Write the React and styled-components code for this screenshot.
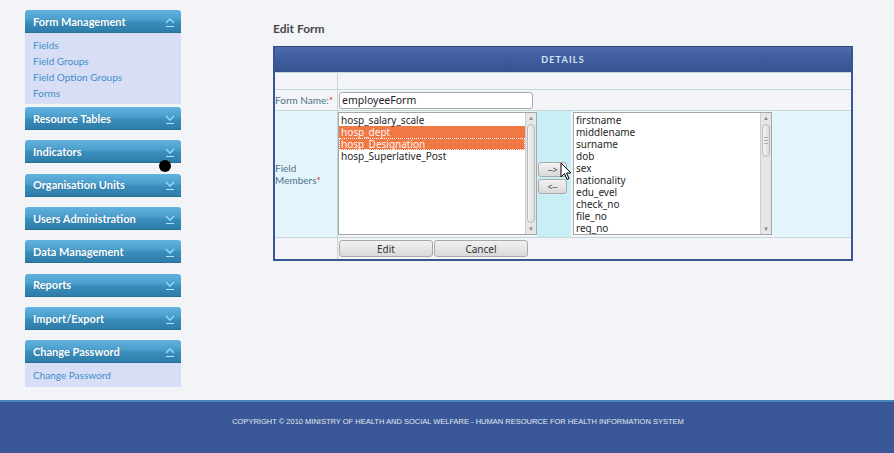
import styled, { createGlobalStyle } from "styled-components";

const GlobalStyle = createGlobalStyle`
  html, body {
    margin: 0;
    padding: 0;
    background: #f3f4f8;
  }
  body {
    font-family: "Lato", "Liberation Sans", sans-serif;
  }
`;

const Page = styled.div`
  position: relative;
  min-height: 453px;
  display: flex;
  flex-direction: column;
`;

const Body = styled.div`
  height: 400px;
  display: flex;
  align-items: flex-start;
`;

const Sidebar = styled.div`
  width: 156px;
  margin: 10px 0 0 25px;
  display: flex;
  flex-direction: column;
`;

const Section = styled.div`
  margin-bottom: ${(p) => (p.$open ? "3px" : "10.35px")};
`;

const SectionHead = styled.div`
  height: 23px;
  display: flex;
  align-items: center;
  justify-content: space-between;
  padding: 0 5px 0 8px;
  box-sizing: border-box;
  border-radius: 3px 3px 0 0;
  background: linear-gradient(#62b2de 0%, #4a9dcb 45%, #3a8ebd 55%, #2e7ca8 100%);
  border-bottom: 1px solid #2a6f96;
  color: #fff;
  font-weight: 700;
  font-size: 11px;
  text-shadow: 0 0 1px rgba(0, 40, 70, 0.3);
`;

const SubMenu = styled.div`
  background: #d9def7;
  padding: 4px 8px ${(p) => (p.$compact ? "4px" : "3px")};
  display: flex;
  flex-direction: column;
`;

const SubLink = styled.a`
  color: #3c8fc6;
  font-size: 10px;
  line-height: 16px;
  text-decoration: none;
`;

const Main = styled.div`
  margin-left: 92px;
  width: 580px;
  padding-top: 21px;
`;

const Title = styled.h2`
  margin: 0 0 10px;
  font-size: 12px;
  font-weight: 700;
  color: #4a4a4a;
  line-height: 15px;
`;

const Frame = styled.div`
  border: 2px solid #3a5593;
  border-top: none;
  background: #f3f4f8;
`;

const FrameHead = styled.div`
  height: 26px;
  box-sizing: border-box;
  display: flex;
  align-items: center;
  justify-content: center;
  background: linear-gradient(#4d6aad, #3f5c9e 50%, #36538f);
  border-top: 1px solid #2d4680;
  color: #dbe3f1;
  font-size: 9px;
  font-weight: 700;
  letter-spacing: 1.2px;
`;

const Row = styled.div`
  display: flex;
  height: ${(p) => p.$h}px;
  background: ${(p) => p.$bg || "#f3f4f8"};
  border-top: 1px solid #c4d8da;
  &:first-of-type {
    border-top: none;
  }
`;

const Label = styled.div`
  width: 62px;
  flex: none;
  border-right: 1px solid #c4d8da;
  display: flex;
  align-items: center;
  font-size: 10px;
  color: #4f7488;
  line-height: 12px;
`;

const Req = styled.span`
  color: #d8252b;
`;

const Cell = styled.div`
  display: flex;
  align-items: ${(p) => p.$align || "center"};
  width: ${(p) => (p.$w ? `${p.$w}px` : "auto")};
  flex: ${(p) => (p.$w ? "none" : "1")};
  background: ${(p) => p.$bg || "transparent"};
  padding: ${(p) => p.$pad || "0"};
  box-sizing: border-box;
`;

const TextInput = styled.div`
  width: 194px;
  height: 17px;
  box-sizing: border-box;
  border: 1px solid #aaa;
  border-radius: 3px;
  background: #fff;
  font-family: "Noto Sans", "Open Sans", sans-serif;
  font-size: 10.5px;
  color: #222;
  line-height: 15px;
  padding-left: 2px;
  margin-left: 1px;
`;

const ListBox = styled.div`
  width: ${(p) => p.$w}px;
  height: 123px;
  box-sizing: border-box;
  border: 1px solid #a6a6a6;
  background: #fff;
  display: flex;
`;

const Options = styled.div`
  flex: 1;
  padding-top: 1px;
  overflow: hidden;
`;

const Option = styled.div`
  height: 12px;
  line-height: 12px;
  font-family: "Noto Sans", "Open Sans", sans-serif;
  font-size: 10px;
  padding-left: 2px;
  color: ${(p) => (p.$sel ? "#fff3ee" : "#262626")};
  background: ${(p) => (p.$sel ? "#ef7845" : "transparent")};
  outline: ${(p) => (p.$focus ? "1px dotted #fff" : "none")};
  outline-offset: -1px;
  white-space: nowrap;
`;

const Scrollbar = styled.div`
  width: 10px;
  flex: none;
  background: #e6e6e6;
  border-left: 1px solid #cfcfcf;
  display: flex;
  flex-direction: column;
  align-items: center;
`;

const ScrollArrow = styled.div`
  height: 10px;
  width: 100%;
  display: flex;
  align-items: center;
  justify-content: center;
  color: #888;
  font-size: 6px;
  line-height: 1;
`;

const Track = styled.div`
  flex: 1;
  width: 100%;
  position: relative;
`;

const Thumb = styled.div`
  position: absolute;
  left: 1px;
  right: 1px;
  top: ${(p) => p.$top}px;
  height: ${(p) => p.$h}px;
  border-radius: 4px;
  border: 1px solid #b9b9b9;
  background: linear-gradient(90deg, #f4f4f4, #dcdcdc);
  box-sizing: border-box;
  display: flex;
  align-items: center;
  justify-content: center;
`;

const Grip = styled.div`
  width: 4px;
  height: 5px;
  border-top: 1px solid #aaa;
  border-bottom: 1px solid #aaa;
  position: relative;
  &::after {
    content: "";
    position: absolute;
    left: 0;
    right: 0;
    top: 2px;
    border-top: 1px solid #aaa;
  }
`;

const Button = styled.button`
  width: ${(p) => p.$w}px;
  height: ${(p) => p.$h}px;
  padding: 0;
  border: 1px solid #a9a9a9;
  border-radius: 3px;
  background: linear-gradient(#f2f2f2, #d9d9d9);
  font-family: "Noto Sans", "Open Sans", sans-serif;
  font-size: ${(p) => p.$fs || 10}px;
  color: #333;
  line-height: 1;
  margin-left: ${(p) => p.$ml || 0}px;
`;

const ArrowStack = styled.div`
  display: flex;
  flex-direction: column;
  gap: 2px;
  margin-left: 1px;
  margin-top: 8px;
`;

const Footer = styled.footer`
  height: 53px;
  box-sizing: border-box;
  background: #3a5897;
  border-top: 2px solid #4a86bd;
  display: flex;
  justify-content: center;
  padding-top: 15px;
  padding-left: 22px;
`;

const FooterText = styled.div`
  font-family: "Liberation Sans", Arial, sans-serif;
  font-size: 7.5px;
  color: #e3e7f0;
`;

const Dot = styled.div`
  position: absolute;
  left: 159px;
  top: 160px;
  width: 12px;
  height: 12px;
  border-radius: 50%;
  background: #000;
`;

const Cursor = styled.svg`
  position: absolute;
  left: 560px;
  top: 162px;
`;

function Chevron({ up }) {
  return (
    <svg width="12" height="13" viewBox="0 0 12 13">
      <path
        d={up ? "M2 8 L6 4 L10 8" : "M2 4 L6 8 L10 4"}
        fill="none"
        stroke="#8fd3fa"
        strokeWidth="1.6"
      />
      <path d="M2 11.5 H10" stroke="#b6e2fb" strokeWidth="1" />
    </svg>
  );
}

const sections = [
  { name: "Form Management", open: true, links: ["Fields", "Field Groups", "Field Option Groups", "Forms"] },
  { name: "Resource Tables" },
  { name: "Indicators" },
  { name: "Organisation Units" },
  { name: "Users Administration" },
  { name: "Data Management" },
  { name: "Reports" },
  { name: "Import/Export" },
  { name: "Change Password", open: true, links: ["Change Password"] },
];

const selected = [
  { name: "hosp_salary_scale" },
  { name: "hosp_dept", sel: true },
  { name: "hosp_Designation", sel: true, focus: true },
  { name: "hosp_Superlative_Post" },
];

const available = [
  "firstname",
  "middlename",
  "surname",
  "dob",
  "sex",
  "nationality",
  "edu_evel",
  "check_no",
  "file_no",
  "reg_no",
];

function Scroll({ thumbTop, thumbH, grip }) {
  return (
    <Scrollbar>
      <ScrollArrow>▲</ScrollArrow>
      <Track>
        <Thumb $top={thumbTop} $h={thumbH}>
          {grip && <Grip />}
        </Thumb>
      </Track>
      <ScrollArrow>▼</ScrollArrow>
    </Scrollbar>
  );
}

export default function App() {
  return (
    <>
      <GlobalStyle />
      <Page>
        <Body>
          <Sidebar>
            {sections.map((s) => (
              <Section key={s.name} $open={s.open}>
                <SectionHead>
                  <span>{s.name}</span>
                  <Chevron up={s.open} />
                </SectionHead>
                {s.links && (
                  <SubMenu $compact={s.links.length === 1}>
                    {s.links.map((l) => (
                      <SubLink key={l} href="#">
                        {l}
                      </SubLink>
                    ))}
                  </SubMenu>
                )}
              </Section>
            ))}
          </Sidebar>

          <Main>
            <Title>Edit Form</Title>
            <Frame>
              <FrameHead>DETAILS</FrameHead>
              <Row $h={16}>
                <Label />
                <Cell />
              </Row>
              <Row $h={20}>
                <Label>
                  Form Name:<Req>*</Req>
                </Label>
                <Cell>
                  <TextInput>employeeForm</TextInput>
                </Cell>
              </Row>
              <Row $h={126} $bg="#e4f4fb">
                <Label>
                  <span>
                    Field
                    <br />
                    Members<Req>*</Req>
                  </span>
                </Label>
                <Cell $w={199} $bg="#f3f4f8" $align="flex-start" $pad="1px 0 0 0">
                  <ListBox $w={199}>
                    <Options>
                      {selected.map((o) => (
                        <Option key={o.name} $sel={o.sel} $focus={o.focus}>
                          {o.name}
                        </Option>
                      ))}
                    </Options>
                    <Scroll thumbTop={1} thumbH={99} />
                  </ListBox>
                </Cell>
                <Cell $w={34} $bg="#c8eff5" $align="center">
                  <ArrowStack>
                    <Button $w={29} $h={15} $fs={8}>
                      --&gt;
                    </Button>
                    <Button $w={29} $h={15} $fs={8}>
                      &lt;--
                    </Button>
                  </ArrowStack>
                </Cell>
                <Cell $w={202} $bg="#f3f4f8" $align="flex-start" $pad="1px 0 0 2px">
                  <ListBox $w={199}>
                    <Options>
                      {available.map((o) => (
                        <Option key={o}>{o}</Option>
                      ))}
                    </Options>
                    <Scroll thumbTop={1} thumbH={33} grip />
                  </ListBox>
                </Cell>
                <Cell />
              </Row>
              <Row $h={21}>
                <Label />
                <Cell>
                  <Button $w={94} $h={17} $ml={1}>
                    Edit
                  </Button>
                  <Button $w={94} $h={17} $ml={1}>
                    Cancel
                  </Button>
                </Cell>
              </Row>
            </Frame>
          </Main>
        </Body>
        <Footer>
          <FooterText>
            COPYRIGHT © 2010 MINISTRY OF HEALTH AND SOCIAL WELFARE - HUMAN RESOURCE FOR HEALTH INFORMATION SYSTEM
          </FooterText>
        </Footer>
        <Dot />
        <Cursor width="12" height="19" viewBox="0 0 12 19">
          <path
            d="M1 1 L1 15 L4.5 11.5 L7 17.5 L9 16.6 L6.6 11 L11 11 Z"
            fill="#fff"
            stroke="#000"
            strokeWidth="1"
            strokeLinejoin="round"
          />
        </Cursor>
      </Page>
    </>
  );
}
